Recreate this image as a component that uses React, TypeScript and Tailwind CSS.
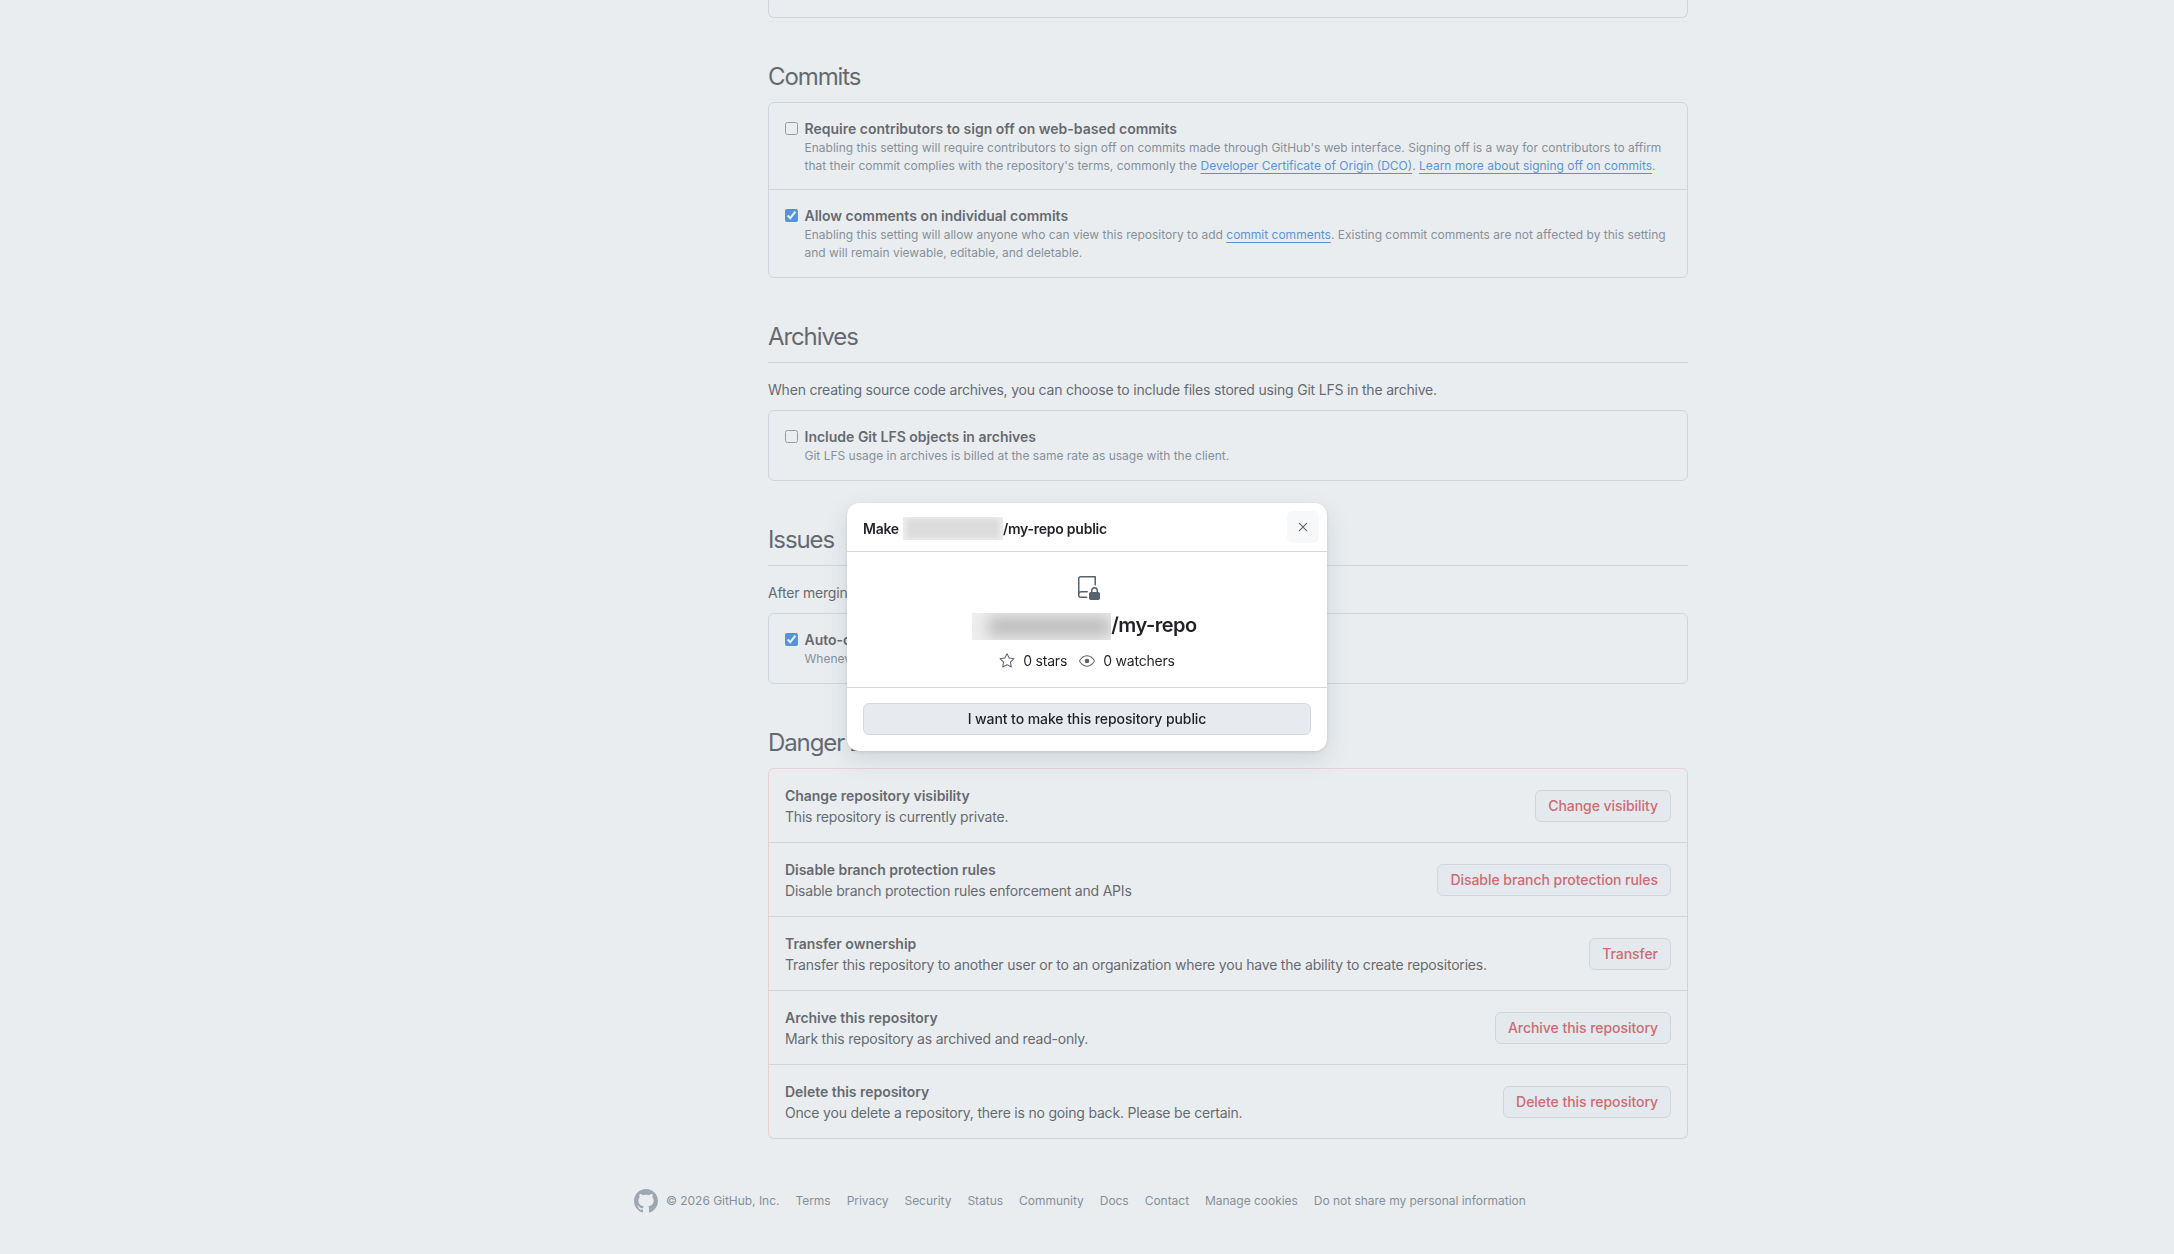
import { ReactNode } from "react";
import { GoEye, GoRepoLocked, GoStar, GoX } from "react-icons/go";

const dangerRows = [
  { title: "Change repository visibility", desc: "This repository is currently private.", action: "Change visibility" },
  { title: "Disable branch protection rules", desc: "Disable branch protection rules enforcement and APIs", action: "Disable branch protection rules" },
  { title: "Transfer ownership", desc: "Transfer this repository to another user or to an organization where you have the ability to create repositories.", action: "Transfer" },
  { title: "Archive this repository", desc: "Mark this repository as archived and read-only.", action: "Archive this repository" },
  { title: "Delete this repository", desc: "Once you delete a repository, there is no going back. Please be certain.", action: "Delete this repository" },
];

const footerLinks = ["Terms", "Privacy", "Security", "Status", "Community", "Docs", "Contact", "Manage cookies", "Do not share my personal information"];

function Heading({ children, line }: { children: ReactNode; line?: boolean }) {
  return (
    <h2 className={`mt-[41px] h-[43px] text-2xl leading-9 font-normal tracking-[-1.1px] text-[#1f2328] ${line ? "box-content border-b border-[#d1d9e0]" : ""}`}>
      {children}
    </h2>
  );
}

function CheckRow({ checked, title, children }: { checked?: boolean; title: string; children: ReactNode }) {
  return (
    <div className="flex border-t border-[#d1d9e0] px-4 pt-[15px] pb-[14px] first:border-t-0 last:pb-[15px]">
      <input type="checkbox" defaultChecked={checked} className="mt-1 mr-[6.5px] h-[13px] w-[13px] shrink-0 accent-[#0969da]" />
      <div className="min-w-0 flex-1">
        <div className="text-sm leading-[21px] font-semibold tracking-normal text-[#1f2328]">{title}</div>
        <p className="text-xs leading-[18px] tracking-normal text-[#59636e]">{children}</p>
      </div>
    </div>
  );
}

function InlineLink({ children }: { children: ReactNode }) {
  return <a className="text-[#0969da] underline underline-offset-[3px]">{children}</a>;
}

export default function App() {
  return (
    <div className="relative h-[1254px] overflow-hidden bg-white font-['Inter',sans-serif] text-sm tracking-[-0.2px] text-[#1f2328]">
      <div className="ml-[768px] w-[920px]">
        <div className="h-[18px] rounded-b-md border border-t-0 border-[#d1d9e0]" />
        <div className="mt-[3px] h-px bg-[#f7f8f9]" />

        {/* Commits has only a faint rule just above its box */}
        <h2 className="mt-[37px] mb-[2px] h-[41px] border-b border-[#f7f8f9] text-2xl leading-9 font-normal tracking-[-1.1px] text-[#1f2328]">Commits</h2>
        <div className="rounded-md border border-[#d1d9e0]">
          <CheckRow title="Require contributors to sign off on web-based commits">
            Enabling this setting will require contributors to sign off on commits made through GitHub's web interface. Signing off is a way for contributors to affirm that their commit complies with the repository's terms, commonly the{" "}
            <InlineLink>Developer Certificate of Origin (DCO)</InlineLink>. <InlineLink>Learn more about signing off on commits</InlineLink>.
          </CheckRow>
          <CheckRow checked title="Allow comments on individual commits">
            Enabling this setting will allow anyone who can view this repository to add <InlineLink>commit comments</InlineLink>. Existing commit comments are not affected by this setting and will remain viewable, editable, and deletable.
          </CheckRow>
        </div>

        <Heading line>Archives</Heading>
        <p className="mt-4 mb-[10px] leading-[21px]">When creating source code archives, you can choose to include files stored using Git LFS in the archive.</p>
        <div className="rounded-md border border-[#d1d9e0]">
          <CheckRow title="Include Git LFS objects in archives">Git LFS usage in archives is billed at the same rate as usage with the client.</CheckRow>
        </div>

        <Heading line>Issues</Heading>
        <p className="mt-4 mb-[10px] leading-[21px]">After merging a pull request, linked issues can be closed automatically.</p>
        <div className="rounded-md border border-[#d1d9e0]">
          <CheckRow checked title="Auto-close issues with merged linked pull requests">Whenever linked pull requests have merged, auto-close the issue.</CheckRow>
        </div>

        <Heading>Danger Zone</Heading>
        <div className="rounded-md border border-[#d1d9e0] border-t-[#ffcfcf] border-l-[#ffcfcf]">
          {dangerRows.map((row) => (
            <div key={row.title} className="box-content flex h-[73px] items-center justify-between border-t border-[#d1d9e0] px-4 first:border-t-0">
              <div className="leading-[21px]">
                <div className="font-semibold tracking-[-0.03px]">{row.title}</div>
                <div>{row.desc}</div>
              </div>
              <button className="h-8 rounded-md border border-[#d1d9e0] bg-[#f6f8fa] px-3 text-sm font-medium tracking-[-0.05px] whitespace-nowrap text-[#d1242f]">{row.action}</button>
            </div>
          ))}
        </div>
      </div>

      <footer className="mt-[50px] ml-[634px] flex items-center text-xs tracking-[-0.03px] text-[#59636e]">
        <svg viewBox="0 0 16 16" width="24" height="24" fill="currentColor" className="mr-2 text-[#818b98]">
          <path d="M8 0c4.42 0 8 3.58 8 8a8.013 8.013 0 0 1-5.45 7.59c-.4.08-.55-.17-.55-.38 0-.27.01-1.13.01-2.2 0-.75-.25-1.23-.54-1.48 1.78-.2 3.65-.88 3.65-3.95 0-.88-.31-1.59-.82-2.15.08-.2.36-1.02-.08-2.12 0 0-.67-.22-2.2.82-.64-.18-1.32-.27-2-.27-.68 0-1.36.09-2 .27-1.53-1.03-2.2-.82-2.2-.82-.44 1.1-.16 1.92-.08 2.12-.51.56-.82 1.28-.82 2.15 0 3.06 1.86 3.75 3.64 3.95-.23.2-.44.55-.51 1.07-.46.21-1.61.55-2.33-.66-.15-.24-.6-.83-1.23-.82-.67.01-.27.38.01.53.34.19.73.9.82 1.13.16.45.68 1.31 2.69.94 0 .67.01 1.3.01 1.49 0 .21-.15.45-.55.38A7.995 7.995 0 0 1 0 8c0-4.42 3.58-8 8-8Z" />
        </svg>
        <span className="mr-4">© 2026 GitHub, Inc.</span>
        <div className="flex gap-4">
          {footerLinks.map((link) => (
            <a key={link}>{link}</a>
          ))}
        </div>
      </footer>

      {/* Backdrop and dialog */}
      <div className="fixed inset-0 flex items-center justify-center bg-[#c8d1da66]">
        <div className="w-[480px] rounded-xl bg-white shadow-[0_8px_24px_rgba(66,74,83,0.15),0_1px_3px_rgba(31,35,40,0.12)]">
          <div className="box-content flex h-12 items-center justify-between border-b border-[#d1d9e0] pr-2 pl-4">
            <div className="flex items-center pt-[3px] font-semibold tracking-[-0.25px]">
              Make
              <span className="relative ml-[4px] h-[23px] w-[100px] overflow-hidden bg-[#ececec]">
                <span className="absolute inset-x-1 inset-y-0.5 bg-[#dcdcdc] blur-[2px]" />
              </span>
              /my-repo public
            </div>
            <button className="flex h-8 w-8 items-center justify-center rounded-md bg-[#f6f8fa] text-[#59636e]">
              <GoX size={16} />
            </button>
          </div>
          <div className="box-content flex h-[135px] flex-col items-center border-b border-[#d1d9e0]">
            <GoRepoLocked size={24} className="mt-6 ml-[2px] text-[#59636e]" />
            <div className="mt-[13px] mr-[5px] flex h-[27px] items-start text-xl leading-[25px] font-semibold tracking-[-0.5px]">
              <span className="relative h-[27px] w-[139px] overflow-hidden bg-[#efefef]">
                <span className="absolute top-1 right-0 bottom-1 left-4 bg-[#b8b8b8] blur-sm" />
              </span>
              /my-repo
            </div>
            <div className="mt-[11px] flex items-center text-sm text-[#1f2328]">
              <GoStar size={16} className="mr-2 text-[#59636e]" />
              <span className="mr-3">0 stars</span>
              <GoEye size={16} className="mr-2 text-[#59636e]" />
              <span>0 watchers</span>
            </div>
          </div>
          <div className="px-4 pt-[15px] pb-4">
            <button className="h-8 w-full rounded-md border border-[#d1d9e0] bg-[#e7ebef] text-sm font-medium tracking-[-0.08px] text-[#1f2328]">I want to make this repository public</button>
          </div>
        </div>
      </div>
    </div>
  );
}
